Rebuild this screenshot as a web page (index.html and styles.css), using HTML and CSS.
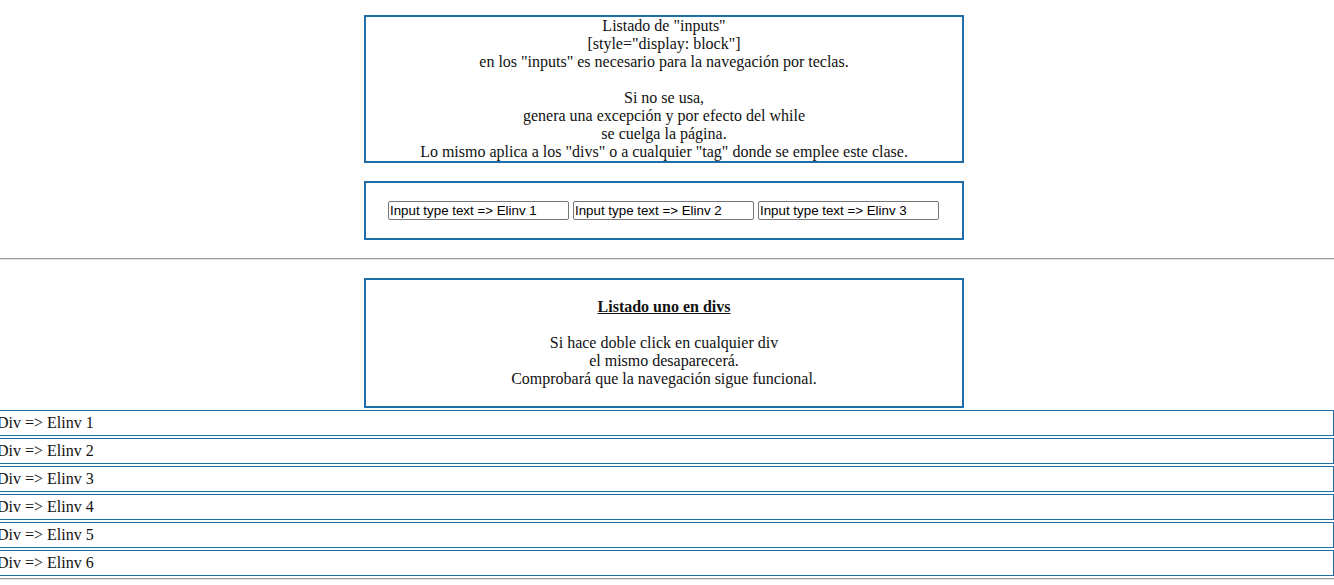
FILE: index.html
```html
<!DOCTYPE html>
<html lang="es">
<head>
<meta charset="utf-8">
<title>Listado</title>
<link rel="stylesheet" href="styles.css">
</head>
<body>
<div class="top">
<div class="box box-info">
Listado de "inputs"<br>
[style="display: block"]<br>
en los "inputs" es necesario para la navegación por teclas.<br>
<br>
Si no se usa,<br>
genera una excepción y por efecto del while<br>
se cuelga la página.<br>
Lo mismo aplica a los "divs" o a cualquier "tag" donde se emplee este clase.
</div>
<div class="box box-inputs">
<input class="field" type="text" value="Input type text =&gt; Elinv 1">
<input class="field" type="text" value="Input type text =&gt; Elinv 2">
<input class="field" type="text" value="Input type text =&gt; Elinv 3">
</div>
</div>
<hr class="rule">
<div class="top">
<div class="box box-divs">
<u class="title">Listado uno en divs</u><br>
<br>
Si hace doble click en cualquier div<br>
el mismo desaparecerá.<br>
Comprobará que la navegación sigue funcional.
</div>
</div>
<div class="list">
<div class="item">Div =&gt; Elinv 1</div>
<div class="item">Div =&gt; Elinv 2</div>
<div class="item">Div =&gt; Elinv 3</div>
<div class="item">Div =&gt; Elinv 4</div>
<div class="item">Div =&gt; Elinv 5</div>
<div class="item">Div =&gt; Elinv 6</div>
</div>
<hr class="rule rule-bottom">
</body>
</html>
```
FILE: styles.css
```css
html, body {
  margin: 0;
  padding: 0;
  background: #fff;
  overflow: hidden;
}
body {
  font-family: "Liberation Serif", "Times New Roman", serif;
  font-size: 16px;
  line-height: 18px;
  color: #111;
}
.top {
  margin-right: 6px;
}
.box {
  width: 596px;
  margin: 0 auto;
  border: 2px solid #1f6ea8;
  text-align: center;
}
.box-info {
  margin-top: 15px;
}
.box-inputs {
  margin-top: 18px;
  padding: 18px 0 18px 22px;
  width: 574px;
  display: flex;
  justify-content: flex-start;
  gap: 4px;
}
.field {
  box-sizing: border-box;
  width: 181px;
  height: 19px;
  margin: 0;
  padding: 0 1px;
  border: 1px solid #767676;
  border-radius: 2px;
  font-family: "Liberation Sans", Arial, sans-serif;
  font-size: 13.33px;
  color: #000;
  background: #fff;
}
.rule {
  margin: 18px 0 0 0;
  height: 0;
  border: 0;
  border-top: 1px solid #9a9a9a;
  border-bottom: 1px solid #e6e6e6;
}
.box-divs {
  margin-top: 18px;
  padding: 18px 0;
}
.title {
  font-weight: bold;
}
.list {
  margin-top: 2px;
  margin-left: -4px;
  display: flex;
  flex-direction: column;
  gap: 2px;
}
.item {
  height: 24px;
  line-height: 24px;
  border: 1px solid #1f6ea8;
  padding: 0;
}
.rule-bottom {
  margin-top: 2px;
}
```
